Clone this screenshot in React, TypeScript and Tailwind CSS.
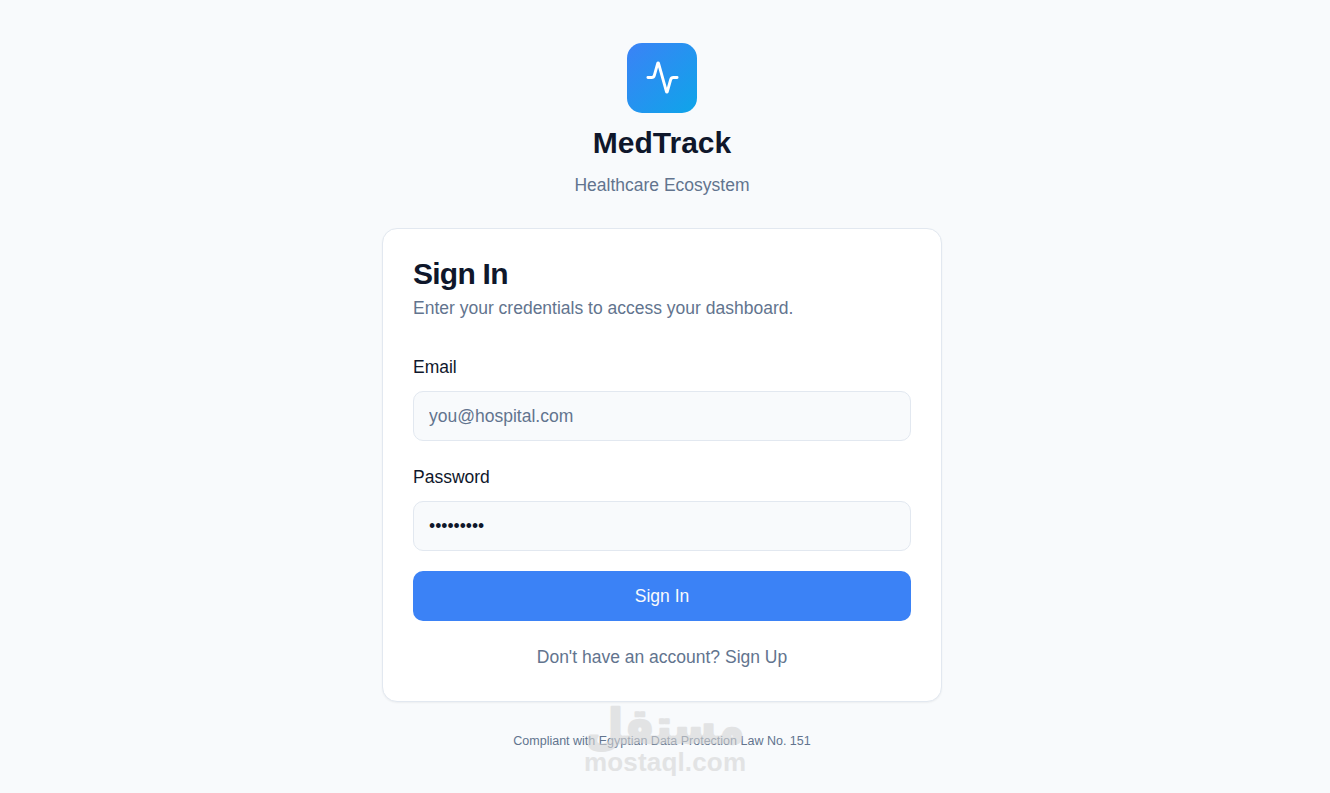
import React from "react";
import { Activity } from "lucide-react";

const inputClass =
  "block h-[50px] w-full rounded-[10px] border border-slate-200 bg-slate-50 px-[15px] text-[17.5px] text-slate-900 outline-none placeholder:text-slate-500";

function Brand() {
  return (
    <div className="flex flex-col items-center">
      <div className="flex size-[70px] items-center justify-center rounded-[15px] bg-linear-to-br/srgb from-[#3b82f6] to-[#0ea5e9]">
        <Activity size={35} strokeWidth={2} className="mb-px ml-px text-white" />
      </div>
      <h1 className="mt-[10px] text-[30px] leading-[40px] font-bold text-slate-900">MedTrack</h1>
      <p className="mt-[10px] text-[17.5px] leading-[25px] text-slate-500">Healthcare Ecosystem</p>
    </div>
  );
}

function Watermark() {
  return (
    <svg
      className="pointer-events-none absolute top-[690px] left-[575px] overflow-visible opacity-60"
      width="180"
      height="100"
      viewBox="0 0 180 100"
      fill="#d5d5d5"
      aria-hidden="true"
    >
      <text
        x="90"
        y="53"
        textAnchor="middle"
        fontSize="48"
        textLength="159"
        lengthAdjust="spacingAndGlyphs"
        stroke="#d5d5d5"
        strokeWidth="2.5"
        strokeLinejoin="round"
        className="font-['DejaVu_Sans',sans-serif] font-bold"
      >
        مستقل
      </text>
      <text
        x="9"
        y="81"
        fontSize="26"
        textLength="162"
        className="font-['Liberation_Sans',sans-serif] font-bold"
      >
        mostaql.com
      </text>
    </svg>
  );
}

export default function App() {
  return (
    <div className="relative h-[793px] w-full overflow-hidden bg-slate-50 font-['Liberation_Sans',Arial,sans-serif]">
      <main className="flex w-[1324px] flex-col items-center pt-[43px]">
        <Brand />

        <form
          className="mt-[30px] w-[560px] rounded-[15px] border border-slate-200 bg-white px-[30px] pt-[25px] pb-[31px] shadow-xs"
          onSubmit={(e) => e.preventDefault()}
        >
          <h2 className="text-[30px] leading-[40px] font-bold tracking-tight text-slate-900">Sign In</h2>
          <p className="mt-[2px] text-[17.5px] leading-[25px] text-slate-500">
            Enter your credentials to access your dashboard.
          </p>

          <div className="mt-[34px]">
            <label htmlFor="email" className="mb-[11px] block text-[17.5px] leading-[25px] text-slate-900">
              Email
            </label>
            <input id="email" type="email" placeholder="you@hospital.com" className={inputClass} />
          </div>

          <div className="mt-[24px]">
            <label htmlFor="password" className="mb-[11px] block text-[17.5px] leading-[25px] text-slate-900">
              Password
            </label>
            <input id="password" type="password" defaultValue="medtrack1" className={inputClass} />
          </div>

          <button
            type="submit"
            className="mt-[20px] h-[50px] w-full rounded-[10px] bg-[#3b82f6] text-[17.5px] text-slate-50"
          >
            Sign In
          </button>

          <p className="mt-[24px] text-center text-[17.5px] leading-[25px] text-slate-500">
            Don't have an account? <a href="#">Sign Up</a>
          </p>
        </form>

        <p className="mt-[30px] text-[12.5px] leading-[18px] text-slate-500">
          Compliant with Egyptian Data Protection Law No. 151
        </p>
      </main>

      <Watermark />
    </div>
  );
}
